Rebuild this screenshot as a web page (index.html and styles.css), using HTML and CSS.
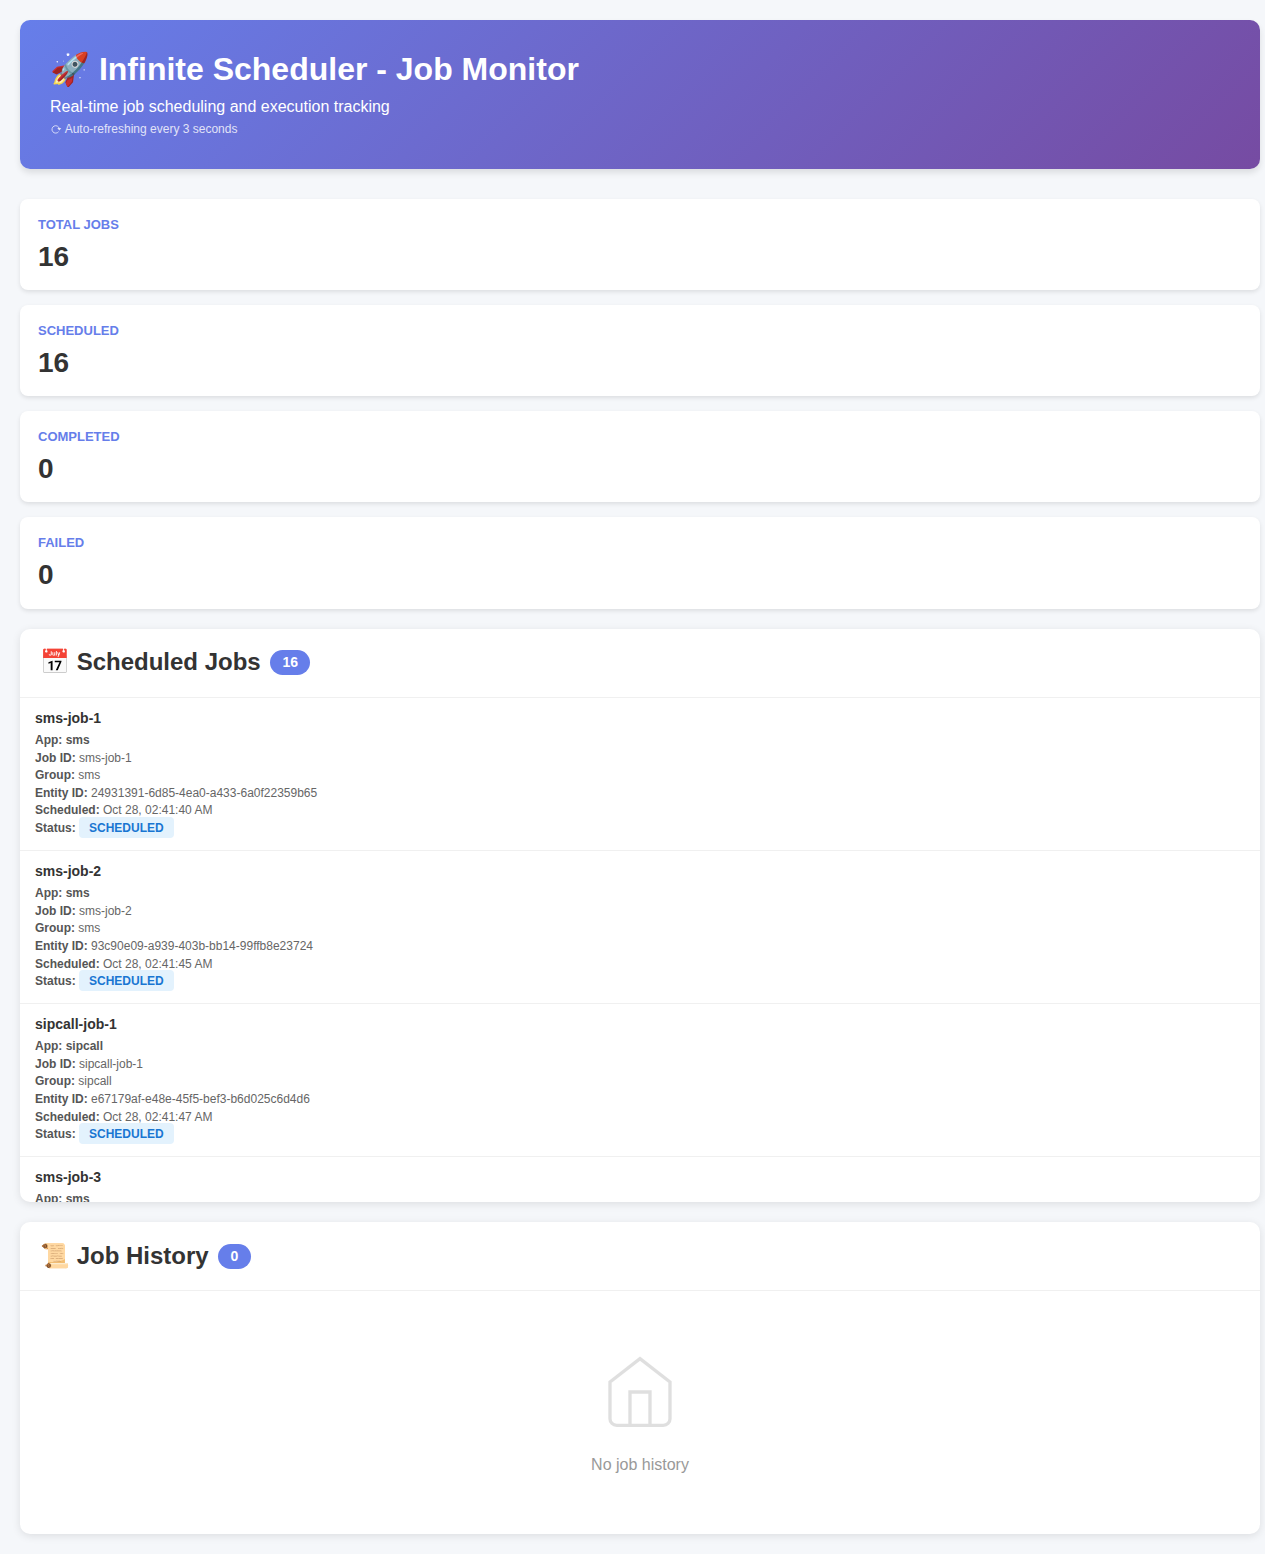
FILE: index.html
```html
<!DOCTYPE html>
<html lang="en">
<head>
<meta charset="UTF-8">
<title>Infinite Scheduler - Job Monitor</title>
<link rel="stylesheet" href="styles.css">
</head>
<body>
<div class="container">
  <header class="header">
    <h1>🚀 Infinite Scheduler - Job Monitor</h1>
    <p class="subtitle">Real-time job scheduling and execution tracking</p>
    <div class="refresh"><svg class="refresh-icon" viewBox="0 0 12 12"><path d="M8.6 8.7A3.7 3.7 0 1 1 9.3 5.6" fill="none" stroke="currentColor" stroke-width=".9"/><path d="M7.3 5.1h4L9.3 7.6z" fill="currentColor"/></svg> Auto-refreshing every 3 seconds</div>
  </header>

  <div class="stats">
    <div class="stat"><h3>Total Jobs</h3><div class="value">16</div></div>
    <div class="stat"><h3>Scheduled</h3><div class="value">16</div></div>
    <div class="stat"><h3>Completed</h3><div class="value">0</div></div>
    <div class="stat"><h3>Failed</h3><div class="value">0</div></div>
  </div>

  <section class="panel scheduled">
    <div class="panel-header"><h2>📅 Scheduled Jobs</h2><span class="count">16</span></div>
    <div class="job-list">
      <article class="job">
        <h4>sms-job-1</h4>
        <div class="details">
          <div><strong>App: sms</strong></div>
          <div><strong>Job ID:</strong> sms-job-1</div>
          <div><strong>Group:</strong> sms</div>
          <div><strong>Entity ID:</strong> 24931391-6d85-4ea0-a433-6a0f22359b65</div>
          <div><strong>Scheduled:</strong> Oct 28, 02:41:40 AM</div>
          <div><strong>Status:</strong> <span class="status">Scheduled</span></div>
        </div>
      </article>
      <article class="job">
        <h4>sms-job-2</h4>
        <div class="details">
          <div><strong>App: sms</strong></div>
          <div><strong>Job ID:</strong> sms-job-2</div>
          <div><strong>Group:</strong> sms</div>
          <div><strong>Entity ID:</strong> 93c90e09-a939-403b-bb14-99ffb8e23724</div>
          <div><strong>Scheduled:</strong> Oct 28, 02:41:45 AM</div>
          <div><strong>Status:</strong> <span class="status">Scheduled</span></div>
        </div>
      </article>
      <article class="job">
        <h4>sipcall-job-1</h4>
        <div class="details">
          <div><strong>App: sipcall</strong></div>
          <div><strong>Job ID:</strong> sipcall-job-1</div>
          <div><strong>Group:</strong> sipcall</div>
          <div><strong>Entity ID:</strong> e67179af-e48e-45f5-bef3-b6d025c6d4d6</div>
          <div><strong>Scheduled:</strong> Oct 28, 02:41:47 AM</div>
          <div><strong>Status:</strong> <span class="status">Scheduled</span></div>
        </div>
      </article>
      <article class="job">
        <h4>sms-job-3</h4>
        <div class="details">
          <div><strong>App: sms</strong></div>
        </div>
      </article>
    </div>
  </section>

  <section class="panel history">
    <div class="panel-header"><h2>📜 Job History</h2><span class="count">0</span></div>
    <div class="empty">
      <svg class="empty-icon" viewBox="0 0 24 24" fill="none" stroke="currentColor">
        <path d="M3 9l9-7 9 7v11a2 2 0 0 1-2 2H5a2 2 0 0 1-2-2z"/>
        <polyline points="9 22 9 12 15 12 15 22"/>
      </svg>
      <p>No job history</p>
    </div>
  </section>
</div>
</body>
</html>
```

FILE: styles.css
```css
* {
  margin: 0;
  padding: 0;
  box-sizing: border-box;
}

html {
  overflow: hidden;
}

body {
  width: 1280px;
  padding: 20px;
  background: #f5f7fa;
  color: #333;
  font-family: "Liberation Sans", Arial, sans-serif;
}

.container {
  width: 1240px;
}

.header {
  height: 148.5px;
  padding: 31px 30px 30px;
  margin-bottom: 30px;
  border-radius: 10px;
  background: linear-gradient(135deg, #667eea 0%, #764ba2 100%);
  box-shadow: 0 4px 6px rgba(0, 0, 0, 0.1);
  color: #fff;
}

.header h1 {
  margin-bottom: 10px;
  font-size: 32px;
  line-height: 37px;
}

.subtitle {
  font-size: 16px;
  line-height: 18px;
}

.refresh {
  margin-top: 5px;
  font-size: 12px;
  line-height: 17px;
  opacity: 0.8;
}

.refresh-icon {
  width: 12px;
  height: 12px;
  vertical-align: -2px;
}

.stats {
  display: grid;
  gap: 15px;
  margin-bottom: 20px;
}

.stat {
  height: 91.25px;
  padding: 18px;
  border-radius: 8px;
  background: #fff;
  box-shadow: 0 2px 4px rgba(0, 0, 0, 0.1);
}

.stat h3 {
  margin-bottom: 9px;
  color: #667eea;
  font-size: 13px;
  line-height: 15px;
  text-transform: uppercase;
}

.value {
  font-size: 28px;
  font-weight: bold;
  line-height: 32px;
}

.panel {
  overflow: hidden;
  border-radius: 10px;
  background: #fff;
  box-shadow: 0 2px 8px rgba(0, 0, 0, 0.1);
}

.scheduled {
  height: 573.5px;
  margin-bottom: 20px;
}

.history {
  height: 312px;
}

.panel-header {
  display: flex;
  align-items: flex-start;
  gap: 10px;
  height: 69.4px;
  padding: 19.5px 20px 0;
  border-bottom: 1.6px solid #f0f0f0;
}

.panel-header h2 {
  font-size: 24px;
  line-height: 28px;
}

.count {
  margin: 2px 0 0 -0.5px;
  padding: 4px 12.3px 5px;
  border-radius: 13px;
  background: #667eea;
  color: #fff;
  font-size: 14px;
  font-weight: bold;
  line-height: 16px;
}

.job {
  height: 153.1px;
  padding: 12px 15px;
  border-bottom: 1px solid #f0f0f0;
}

.job h4 {
  margin-bottom: 6.2px;
  font-size: 14px;
  line-height: 16px;
}

.details {
  color: #666;
  font-size: 12px;
  line-height: 17.6px;
}

.details strong {
  color: #555;
}

.status {
  display: inline;
  padding: 4px 10px 3px;
  border-radius: 4px;
  background: #e3f2fd;
  color: #1976d2;
  font-weight: bold;
  text-transform: uppercase;
}

.empty {
  padding: 60.8px 20px 0;
  color: #999;
  text-align: center;
}

.empty-icon {
  display: block;
  width: 80px;
  height: 80px;
  margin: 0 auto 20px;
  opacity: 0.3;
}

.empty p {
  font-size: 16px;
  line-height: 26px;
}
```
